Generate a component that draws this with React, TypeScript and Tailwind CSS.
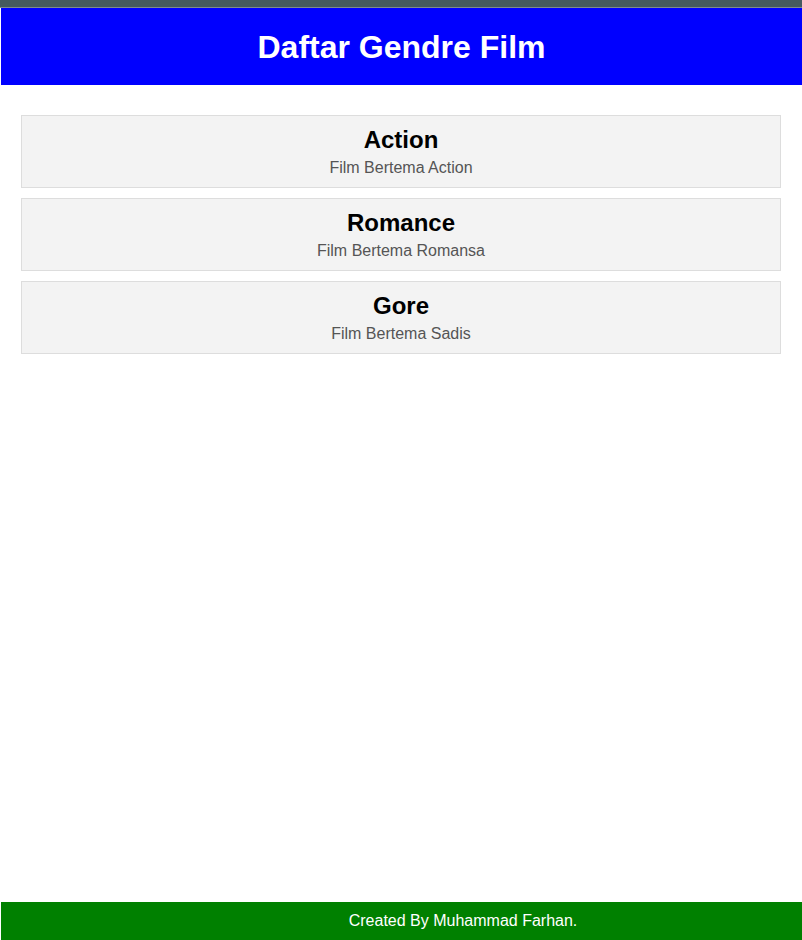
const GENRES = [
  { title: 'Action', desc: 'Film Bertema Action' },
  { title: 'Romance', desc: 'Film Bertema Romansa' },
  { title: 'Gore', desc: 'Film Bertema Sadis' },
];

export default function App() {
  return (
    <div className="min-h-screen flex flex-col bg-white font-['Liberation_Sans',Arial,sans-serif]">
      {/* top strip */}
      <div className="h-[8px] bg-[#455a60] border-b border-[#7f8c90]" />

      <div className="flex-1 flex flex-col pl-px">
        <header className="h-[77px] bg-[#0000ff] flex items-center justify-center">
          <h1 className="text-[32px] font-bold text-white">Daftar Gendre Film</h1>
        </header>

        <main className="flex-1 pl-5 pr-[21px] pt-[30px] flex flex-col gap-[10px]">
          {GENRES.map(({ title, desc }) => (
            <div
              key={title}
              className="border border-[#dddddd] bg-[#f3f3f3] pt-[10px] pb-[7px] text-center"
            >
              <h2 className="text-2xl leading-[28px] font-bold text-black mb-[2px]">{title}</h2>
              <p className="text-base leading-6 text-[#555555]">{desc}</p>
            </div>
          ))}
        </main>

        <footer className="h-[38px] bg-[#008000] flex items-center justify-center pl-[123px]">
          <p className="text-base text-white">Created By Muhammad Farhan.</p>
        </footer>
      </div>
    </div>
  );
}
